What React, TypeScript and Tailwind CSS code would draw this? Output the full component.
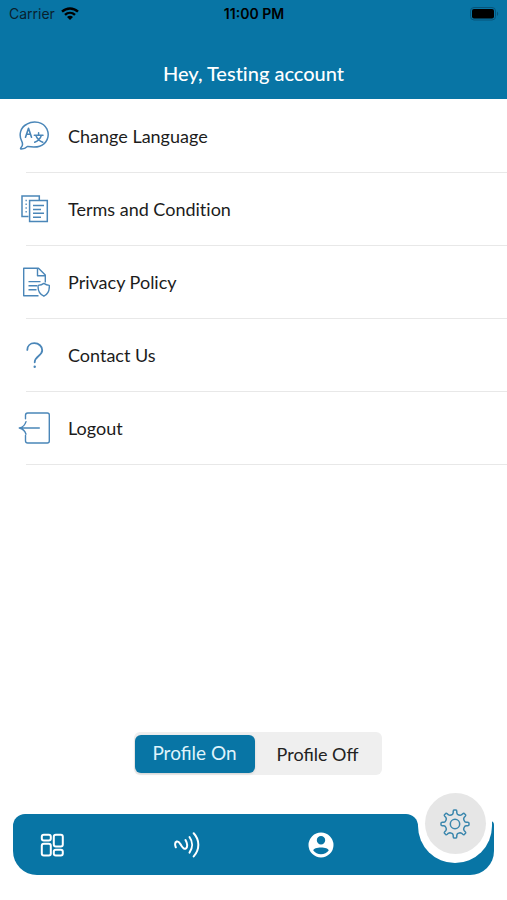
import { useState } from "react";
import type { ReactNode } from "react";

function WifiIcon() {
  return (
    <svg width="18" height="14" viewBox="0 0 18 14" fill="none" stroke="currentColor" strokeWidth="2.4" aria-hidden="true">
      <path d="M1 4.7C5.6 .4 12.4 .4 17 4.7" />
      <path d="M4 7.9C6.9 5.2 11.1 5.2 14 7.9" />
      <path d="M9 12.9 6 9.9C7.7 8.3 10.3 8.3 12 9.9Z" fill="currentColor" stroke="none" />
    </svg>
  );
}

function BatteryIcon() {
  return (
    <svg width="29" height="14" viewBox="0 0 29 14" aria-hidden="true">
      <rect x="0.5" y="0.5" width="25" height="12.5" rx="3.5" fill="none" stroke="#07547a" />
      <rect x="2" y="2" width="22" height="9.5" rx="2" fill="#000" />
      <path d="M27 4.5C28.6 5.2 28.6 8.2 27 9Z" fill="#07547a" />
    </svg>
  );
}

function LanguageIcon() {
  return (
    <svg width="32" height="32" viewBox="0 0 32 32" fill="none" stroke="currentColor" strokeWidth="1.5" strokeLinecap="round" strokeLinejoin="round" aria-hidden="true">
      <path d="M3.7 21.2C.4 14.7 2.6 7.2 8.8 4.2 16-.1 25.5 2 29 9.2 32.1 16 28.9 23.8 21.7 26.2 17.3 27.7 13 27 9.4 26.5 7.2 28.6 4.9 29.2 3 29.1 2.3 28.7 2.5 28.1 3.1 27.6 4.8 25.7 5 23.7 3.7 21.2Z" />
      <path d="M7.5 17.2 10.5 8.2 13.5 17.2M8.6 14.3H12.4" strokeWidth="1.6" />
      <path d="M16.3 15.2H25M20.6 12.8V15.2M23.3 15.5C22.3 18.8 19.9 21 16.7 22.2M17.9 15.5C19 18.8 21.3 21 24.8 22.2" strokeWidth="1.5" />
    </svg>
  );
}

function TermsIcon() {
  return (
    <svg width="32" height="32" viewBox="0 0 32 32" fill="none" stroke="currentColor" strokeWidth="1.5" aria-hidden="true">
      <path d="M10.5 23.5H4V3H21.3V7" />
      <path d="M7.5 7.5H8.8M7.5 11.3H8.8M7.5 15H8.8M7.5 18.8H8.8" strokeWidth="1.4" />
      <path d="M11.6 7.4H29.3V28.5H11.6Z" />
      <path d="M15 12.5H26M15 16.4H23M15 20.2H26M15 24.2H23" />
    </svg>
  );
}

function PrivacyIcon() {
  return (
    <svg width="32" height="32" viewBox="0 0 32 32" fill="none" stroke="currentColor" strokeWidth="1.4" strokeLinejoin="round" aria-hidden="true">
      <path d="M20.5 29.7H5.7V2.2H20.5L27.3 9V16.4" />
      <path d="M19.5 2.5V9.7H27" />
      <path d="M10.5 15.6H22.5M10.5 19.7H19M10.5 23.7H18.5" />
      <path d="M25.9 17.4C27.9 18.9 29.5 19.3 31.3 19.4 31.6 24.5 29.5 28.4 25.9 30.2 22 28.4 19.7 24.5 20.1 19.4 22.1 19.3 24 18.9 25.9 17.4Z" />
    </svg>
  );
}

function QuestionIcon() {
  return (
    <svg width="32" height="32" viewBox="0 0 32 32" fill="none" stroke="currentColor" strokeWidth="1.8" strokeLinecap="round" aria-hidden="true">
      <path d="M9.3 10.9C9.3 6.9 12.2 4.2 16.4 4.2 20.8 4.2 24.2 7.3 24.2 11.2 24.2 17.1 16.7 16.8 16.7 23.3" />
      <circle cx="16.7" cy="27.7" r="1.2" fill="currentColor" stroke="none" />
    </svg>
  );
}

function LogoutIcon() {
  return (
    <svg width="32" height="32" viewBox="0 0 32 32" fill="none" stroke="currentColor" strokeWidth="1.4" strokeLinecap="round" strokeLinejoin="round" aria-hidden="true">
      <path d="M7.5 6.8V3.2Q7.5 1 9.7 1H29.3Q31.3 1 31.3 3V29Q31.3 31 29.3 31H9.7Q7.5 31 7.5 28.8V23.5" />
      <path d="M21.3 16H1.7M8 9.6C7 13 4.5 15.3 1.3 16 4.5 16.7 7 19 8 22.2" />
    </svg>
  );
}

function DashboardIcon() {
  return (
    <svg width="26" height="26" viewBox="0 0 26 26" fill="none" stroke="currentColor" strokeWidth="2" aria-hidden="true">
      <rect x="2.8" y="2.8" width="9" height="5.7" rx="2" />
      <rect x="2.8" y="11.7" width="9" height="11.8" rx="2" />
      <rect x="14.8" y="2.8" width="9" height="11.8" rx="2" />
      <rect x="14.8" y="17.8" width="9" height="5.7" rx="2" />
    </svg>
  );
}

function NfcIcon() {
  return (
    <svg width="26" height="26" viewBox="0 0 26 26" fill="none" stroke="currentColor" strokeWidth="2" strokeLinecap="round" strokeLinejoin="round" aria-hidden="true">
      <path d="M1.8 15.3C.8 12.6 1 10.2 2.7 9.5 4.8 8.7 5.8 11.3 7.4 13.7 9 16.2 10.4 17.5 12 16.4 13.8 15.1 13.4 11.2 11.5 8" />
      <path d="M15.5 5C18.9 9.7 18.9 15.8 15.5 20.6" />
      <path d="M19.7 1.3C25.9 8 25.9 17.6 19.7 24.4" />
    </svg>
  );
}

function AccountIcon() {
  return (
    <svg width="26" height="26" viewBox="0 0 26 26" fill="currentColor" aria-hidden="true">
      <path fillRule="evenodd" d="M13 .5A12.5 12.5 0 1 0 13 25.5 12.5 12.5 0 1 0 13 .5ZM13 4A4.2 4.2 0 1 1 13 12.4 4.2 4.2 0 1 1 13 4ZM13 15.5C17 15.5 20.7 16.8 20.7 18.5 19 20.9 16.2 22.2 13 22.2S7 20.9 5.3 18.5C5.3 16.8 9 15.5 13 15.5Z" />
    </svg>
  );
}

// Outline of an eight-toothed gear: each tooth has a rounded tip, each valley a shallow scoop.
function gearPath(center: number) {
  const at = (radius: number, degrees: number) => {
    const angle = (degrees * Math.PI) / 180;
    return `${(center + radius * Math.sin(angle)).toFixed(2)} ${(center - radius * Math.cos(angle)).toFixed(2)}`;
  };
  let d = `M${at(11.5, -9)}`;
  for (let tooth = 0; tooth < 8; tooth++) {
    const a = tooth * 45;
    d += `L${at(12.8, a - 8)}Q${at(14, a - 7)} ${at(14, a - 4)}L${at(14, a + 4)}Q${at(14, a + 7)} ${at(12.8, a + 8)}`;
    d += `L${at(11.5, a + 9)}Q${at(10.4, a + 11)} ${at(10, a + 15)}Q${at(9.6, a + 22.5)} ${at(10, a + 30)}Q${at(10.4, a + 34)} ${at(11.5, a + 36)}`;
  }
  return `${d}Z`;
}

function GearIcon() {
  return (
    <svg width="30" height="30" viewBox="0 0 30 30" fill="none" stroke="currentColor" strokeWidth="1.5" strokeLinejoin="round" aria-hidden="true">
      <path d={gearPath(15)} />
      <circle cx="15" cy="15" r="4.7" />
    </svg>
  );
}

const menuItems: { label: string; icon: ReactNode }[] = [
  { label: "Change Language", icon: <LanguageIcon /> },
  { label: "Terms and Condition", icon: <TermsIcon /> },
  { label: "Privacy Policy", icon: <PrivacyIcon /> },
  { label: "Contact Us", icon: <QuestionIcon /> },
  { label: "Logout", icon: <LogoutIcon /> },
];

export default function App() {
  const [profileOn, setProfileOn] = useState(true);
  const selected = "bg-[#0875a5] text-[#dff3fb] shadow";
  const unselected = "text-[#222]";

  return (
    <div className="flex min-h-screen flex-col bg-white font-[Lato,sans-serif] text-[#1c1c1c]">
      <header className="flex h-[99px] flex-col bg-[#0875a5]">
        <div className="grid h-7 grid-cols-3 items-center pr-2 pl-[9px] font-[Inter,sans-serif] text-sm text-black">
          <div className="flex items-center gap-1.5 text-[#08212e]">
            <span>Carrier</span>
            <span className="text-black"><WifiIcon /></span>
          </div>
          <span className="text-center font-semibold">11:00 PM</span>
          <span className="justify-self-end"><BatteryIcon /></span>
        </div>
        <h1 className="pt-[31px] text-center text-xl leading-7 font-medium text-white [font-variant-ligatures:no-common-ligatures]">Hey, Testing account</h1>
      </header>

      <main className="flex flex-1 flex-col">
        <ul className="pt-px">
          {menuItems.map((item) => (
            <li key={item.label}>
              <button type="button" className="flex h-[72px] w-full items-center gap-[18px] pl-[18px] text-left text-lg leading-6 [font-variant-ligatures:no-common-ligatures]">
                <span className="text-[#4a86b8]">{item.icon}</span>
                <span>{item.label}</span>
              </button>
              <div className="ml-[26px] h-px bg-[#e8e8e8]" />
            </li>
          ))}
        </ul>

        <div className="mt-auto flex justify-center pb-[39px] pl-2">
          <div role="group" aria-label="Profile visibility" className="flex h-[43px] w-[248px] items-center rounded-md bg-[#efefef] px-px">
            <button type="button" aria-pressed={profileOn} onClick={() => setProfileOn(true)} className={`h-[38px] w-[120px] rounded-md text-[19px] ${profileOn ? selected : unselected}`}>
              Profile On
            </button>
            <button type="button" aria-pressed={!profileOn} onClick={() => setProfileOn(false)} className={`h-[38px] flex-1 rounded-md text-lg ${profileOn ? unselected : selected}`}>
              Profile Off
            </button>
          </div>
        </div>
      </main>

      <nav aria-label="Main" className="flex h-[86px] px-[13px] pb-[25px]">
        <div className="flex flex-1 items-center justify-between rounded-tl-xl rounded-tr-xl rounded-bl-3xl bg-[#0875a5] pr-[84px] pl-[26px] text-white">
          <button type="button" aria-label="Dashboard"><DashboardIcon /></button>
          <button type="button" aria-label="Share"><NfcIcon /></button>
          <button type="button" aria-label="Account"><AccountIcon /></button>
        </div>
        <div className="relative mt-[7px] w-[76px] rounded-tr-sm rounded-br-3xl bg-[#0875a5]">
          <div className="absolute bottom-3 left-0 flex h-[74px] w-[74px] items-end justify-center rounded-b-full bg-white pb-[9px]">
            <button type="button" aria-label="Settings" className="flex h-[61px] w-[61px] items-center justify-center rounded-full bg-[#e6e6e6] text-[#3c87ad]">
              <GearIcon />
            </button>
          </div>
        </div>
      </nav>
    </div>
  );
}
